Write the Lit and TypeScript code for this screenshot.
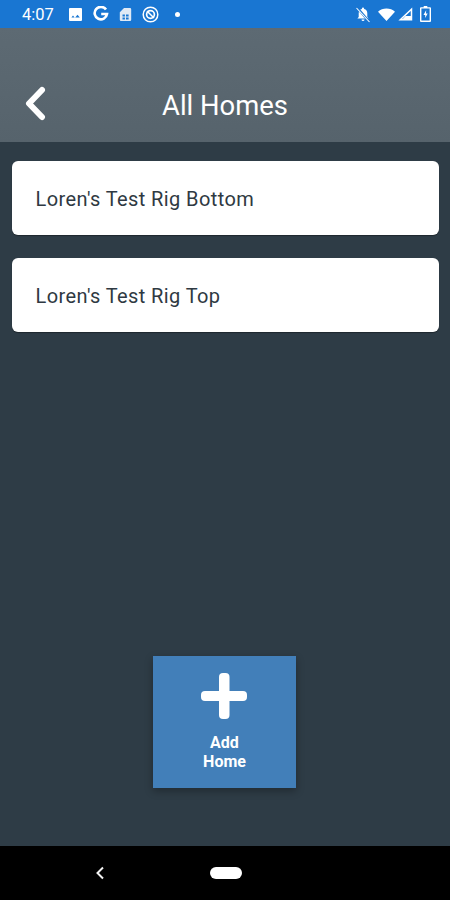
import { css, html, LitElement } from "lit";
import { customElement, property } from "lit/decorators.js";

@customElement("home-card")
export class HomeCard extends LitElement {
  @property() name = "";

  render() {
    return html`<div class="card">${this.name}</div>`;
  }

  static styles = css`
    :host {
      display: block;
    }

    .card {
      height: 74px;
      box-sizing: border-box;
      display: flex;
      align-items: center;
      padding: 2px 0 0 23.5px;
      background: #fff;
      border-radius: 6px;
      box-shadow: 0 1px 1px rgba(0, 0, 0, 0.35);
      color: #2f3942;
      font-size: 20px;
      letter-spacing: 0.4px;
    }
  `;
}

@customElement("app-root")
export class AppRoot extends LitElement {
  private homes = ["Loren's Test Rig Bottom", "Loren's Test Rig Top"];

  private renderStatusBar() {
    return html`
      <div class="status">
        <div class="status-left">
          <span class="time">4:07</span>
          <svg width="15" height="15" viewBox="0 0 15 15">
            <path fill="#fff" fill-rule="evenodd" d="M2 1h11a1 1 0 0 1 1 1v11a1 1 0 0 1-1 1H2a1 1 0 0 1-1-1V2a1 1 0 0 1 1-1zM3.4 10.600h3.200L5 8.600zM7.200 10.600h4.600L9.500 7.800z" />
          </svg>
          <svg width="16" height="16" viewBox="0 0 16 16">
            <path fill="none" stroke="#fff" stroke-width="2.600" d="M13 3.600A6.200 6.200 0 1 0 14 8H8.200" />
          </svg>
          <svg width="13" height="15" viewBox="0 0 13 15">
            <path fill="#dfe9f5" fill-rule="evenodd" d="M5 1h6a1.200 1.200 0 0 1 1.200 1.200v10.600A1.200 1.200 0 0 1 11 14H2a1.200 1.200 0 0 1-1.200-1.200V5.200zM3.500 7.500v2h2.400v-2zM7 7.500v2h2.600v-2zM3.500 10.400v2h2.400v-2zM7 10.400v2h2.600v-2z" />
          </svg>
          <svg width="17" height="17" viewBox="0 0 17 17">
            <circle cx="8.500" cy="8.500" r="7.300" fill="none" stroke="#fff" stroke-width="1.500" />
            <circle cx="8.500" cy="8.500" r="3.900" fill="none" stroke="#fff" stroke-width="1.700" />
            <path fill="none" stroke="#fff" stroke-width="1.500" d="M5 5l7 7" />
          </svg>
          <span class="dot"></span>
        </div>
        <div class="status-right">
          <svg width="16" height="17" viewBox="0 0 16 17">
            <path fill="#fff" d="M8 1.400a1.100 1.100 0 0 1 1.100 1.100v.6A4.300 4.300 0 0 1 12.300 7.300v3.700l1.300 1.500H2.400L3.700 11V7.300A4.300 4.300 0 0 1 6.900 3.100v-.6A1.100 1.100 0 0 1 8 1.400zM6.500 13.500h3A1.500 1.500 0 0 1 6.500 13.500z" />
            <path stroke="#1976d2" stroke-width="2.400" d="M2 1.500l12 14" />
            <path stroke="#fff" stroke-width="1.100" d="M1.500 2l13 14" />
          </svg>
          <svg class="wifi" width="17" height="13" viewBox="0 0 17 13">
            <path fill="#fff" d="M0 3.800A12.500 12.500 0 0 1 8.500.5 12.500 12.500 0 0 1 17 3.800L8.500 13z" />
          </svg>
          <svg class="signal" width="15" height="14" viewBox="0 0 15 14">
            <path fill="none" stroke="#fff" stroke-width="1.500" d="M13.500 2.200V12.800H2.300z" />
            <path fill="#fff" d="M7.500 9h6v3.800H4z" />
          </svg>
          <svg class="battery" width="11" height="16" viewBox="0 0 11 16">
            <path fill="#fff" fill-rule="evenodd" d="M3.700 0h3.600v1.200H10a1 1 0 0 1 1 1V15a1 1 0 0 1-1 1H1a1 1 0 0 1-1-1V2.200a1 1 0 0 1 1-1h2.700zM1.400 2.600v12h8.200v-12z" />
            <path fill="#fff" d="M6.200 4L3.500 9h1.700v3l2.500-4.500H6z" />
          </svg>
        </div>
      </div>
    `;
  }

  render() {
    return html`
      <div class="screen">
        ${this.renderStatusBar()}
        <header class="header">
          <svg class="back" width="24" height="36" viewBox="0 0 24 36">
            <path fill="none" stroke="#fff" stroke-width="6" stroke-linecap="round" stroke-linejoin="round" d="M19 4L6 17.500 19 31" />
          </svg>
          <h1 class="title">All Homes</h1>
        </header>
        <main class="main">
          <div class="list">
            ${this.homes.map((name) => html`<home-card .name=${name}></home-card>`)}
          </div>
          <button class="add">
            <svg class="plus" width="46" height="46" viewBox="0 0 46 46">
              <rect x="18" y="0" width="10.500" height="46" rx="4" fill="#fff" />
              <rect x="0" y="18" width="46" height="10" rx="4" fill="#fff" />
            </svg>
            <span>Add<br />Home</span>
          </button>
        </main>
        <nav class="nav">
          <svg class="nav-back" width="10" height="14" viewBox="0 0 10 14">
            <path fill="none" stroke="#f2f2f2" stroke-width="2" d="M8 1.500L2.500 7 8 12.500" />
          </svg>
          <span class="pill"></span>
        </nav>
      </div>
    `;
  }

  static styles = css`
    :host {
      display: block;
      font-family: Roboto, "Liberation Sans", sans-serif;
    }

    .screen {
      width: 450px;
      height: 900px;
      display: flex;
      flex-direction: column;
      background: #2e3c46;
    }

    .status {
      height: 28px;
      flex: none;
      display: flex;
      align-items: center;
      justify-content: space-between;
      padding: 0 19px 0 22px;
      background: #1976d2;
    }

    .status-left,
    .status-right {
      display: flex;
      align-items: center;
    }

    .status-left {
      gap: 10px;
    }

    .status-right {
      gap: 3px;
    }

    .time {
      color: #fff;
      font-size: 16.5px;
      margin-right: 4px;
    }

    .dot {
      width: 5px;
      height: 5px;
      margin-left: 6px;
      border-radius: 50%;
      background: #fff;
    }

    .wifi {
      margin-left: 4px;
    }

    .battery {
      margin-left: 4px;
    }

    .header {
      height: 114px;
      flex: none;
      box-sizing: border-box;
      padding: 0 0 16px 23px;
      display: flex;
      align-items: flex-end;
      background: linear-gradient(#5d6a73, #56636c);
    }

    .back {
      flex: none;
      margin-bottom: 4px;
    }

    .title {
      flex: 1;
      margin: 0 47px 0 0;
      color: #fff;
      font-size: 27.4px;
      font-weight: 400;
      line-height: 40px;
      text-align: center;
    }

    .main {
      flex: 1;
      display: flex;
      flex-direction: column;
      align-items: center;
      justify-content: space-between;
      padding: 19px 11px 58px 12px;
    }

    .list {
      width: 100%;
      display: flex;
      flex-direction: column;
      gap: 23px;
    }

    .add {
      width: 143px;
      height: 132px;
      box-sizing: border-box;
      margin-right: 2px;
      padding: 17px 0 0;
      display: flex;
      flex-direction: column;
      align-items: center;
      gap: 14px;
      border: none;
      background: #427fb9;
      box-shadow: 0 3px 8px rgba(0, 0, 0, 0.3);
      color: #fff;
      font-family: inherit;
      font-size: 16px;
      font-weight: 700;
      line-height: 19px;
    }

    .plus {
      margin-right: 1px;
    }

    .nav {
      height: 54px;
      flex: none;
      display: flex;
      align-items: center;
      background: #000;
      padding-left: 95px;
    }

    .nav-back {
      margin-right: 105px;
    }

    .pill {
      width: 32px;
      height: 12px;
      border-radius: 6px;
      background: #fff;
    }
  `;
}

declare global {
  interface HTMLElementTagNameMap {
    "app-root": AppRoot;
    "home-card": HomeCard;
  }
}
